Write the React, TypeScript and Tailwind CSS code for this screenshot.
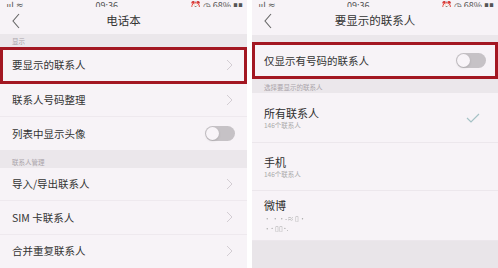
import React from "react";

const FONT = { fontFamily: '"Noto Sans CJK SC", "Noto Sans", sans-serif' };

function Chevron() {
  return (
    <svg width="7" height="12" viewBox="0 0 7 12" fill="none" className="mr-[2px] shrink-0">
      <path d="M1 1l5 5-5 5" stroke="#d3cdd3" strokeWidth="1" />
    </svg>
  );
}

function Toggle() {
  return (
    <div className="relative h-[15px] w-[30px] shrink-0 rounded-full bg-[#c6c2c6]">
      <div className="absolute left-[1px] top-[1px] h-[13px] w-[13px] rounded-full bg-[#f8f4f8] shadow-sm" />
    </div>
  );
}

function StatusBar() {
  return (
    <div className="flex h-[7px] items-end justify-between overflow-hidden px-[4px] text-[9px] leading-[9px] text-[#555]">
      <span className="-mb-[3px]">.ııl ≋</span>
      <span className="-mb-[3px]">09:36</span>
      <span className="-mb-[3px]">⏰ ◷ 68% ▮▮</span>
    </div>
  );
}

function NavBar({ title }: { title: string }) {
  return (
    <div className="relative flex h-[28px] items-center justify-center">
      <svg width="10" height="16" viewBox="0 0 10 16" className="absolute left-[11px] top-[6px]">
        <path d="M8 1L2 8l6 7" stroke="#666" strokeWidth="1.1" fill="none" />
      </svg>
      <span className="text-[11.5px] text-[#333]">{title}</span>
    </div>
  );
}

function Section({ label, h = "h-[13px]" }: { label: string; h?: string }) {
  return (
    <div className={`flex ${h} items-end bg-[#ebe7eb] px-[12px] pb-[1px] text-[6.5px] leading-[9px] text-[#aaa4aa]`}>
      {label}
    </div>
  );
}

function Row({ label, right, boxed, border = true }: { label: string; right: React.ReactNode; boxed?: boolean; border?: boolean }) {
  return (
    <div
      className={`flex items-center justify-between text-[10.5px] text-[#333] ${
        boxed
          ? "h-[37px] border-[3px] border-[#a31722] px-[9px]"
          : border
            ? "h-[34px] border-b border-[#eee9ee] px-[12px]"
            : "h-[34px] px-[12px]"
      }`}
    >
      <span>{label}</span>
      {right}
    </div>
  );
}

function Choice({ title, sub, checked, children, h = "h-[50px]" }: { title: string; sub?: string; checked?: boolean; children?: React.ReactNode; h?: string }) {
  return (
    <div className={`flex ${h} items-center justify-between border-b border-[#ece7ec] px-[12px]`}>
      <div className="flex flex-col">
        <span className="text-[11px] leading-[15px] text-[#2e2e2e]">{title}</span>
        {sub && <span className="text-[6.5px] leading-[8px] text-[#aaa]">{sub}</span>}
        {children}
      </div>
      {checked && (
        <svg width="14" height="10" viewBox="0 0 14 10" className="mr-[6px]">
          <path d="M1 5l4 4 8-8" stroke="#a6c2c6" strokeWidth="1.2" fill="none" />
        </svg>
      )}
    </div>
  );
}

export default function App() {
  return (
    <div className="flex h-[268px] w-[498px] overflow-hidden bg-white" style={FONT}>
      {/* 左侧：电话本 */}
      <div className="flex w-[247px] flex-col bg-[#f7f3f7]">
        <StatusBar />
        <NavBar title="电话本" />
        <Section label="显示" />
        <Row label="要显示的联系人" right={<Chevron />} boxed />
        <Row label="联系人号码整理" right={<Chevron />} />
        <Row label="列表中显示头像" right={<Toggle />} border={false} />
        <Section label="联系人管理" h="h-[18px]" />
        <Row label="导入/导出联系人" right={<Chevron />} />
        <Row label="SIM  卡联系人" right={<Chevron />} />
        <Row label="合并重复联系人" right={<Chevron />} border={false} />
      </div>

      <div className="w-[5px]" />

      {/* 右侧：要显示的联系人 */}
      <div className="flex w-[246px] flex-col bg-[#f7f3f7]">
        <StatusBar />
        <NavBar title="要显示的联系人" />
        <div className="h-[7px] bg-[#ebe7eb]" />
        <Row label="仅显示有号码的联系人" right={<Toggle />} boxed />
        <Section label="选择要显示的联系人" h="h-[14px]" />
        <Choice title="所有联系人" sub="146个联系人" checked />
        <Choice title="手机" sub="146个联系人" h="h-[48px]" />
        <Choice title="微博">
          <span className="text-[6.5px] leading-[10px] text-[#aaa] blur-[0.5px]">·  ··-≈ ▯·</span>
          <span className="text-[6.5px] leading-[10px] text-[#aaa] blur-[0.5px]">·˙ ▯▯˙.</span>
        </Choice>
        <div className="flex-1 bg-[#e9e5e9]" />
      </div>
    </div>
  );
}
